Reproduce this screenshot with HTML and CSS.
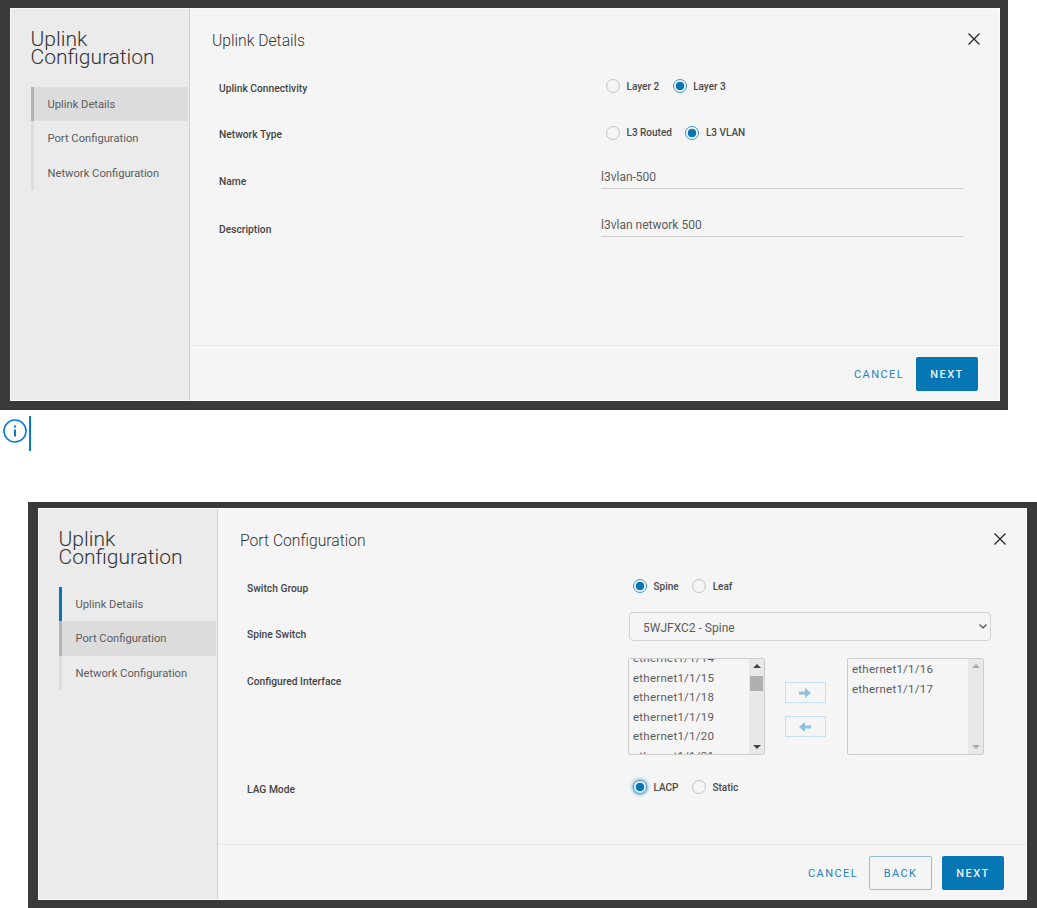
FILE: index.html
```html
<!DOCTYPE html>
<html lang="en">

<head>
    <meta charset="UTF-8" />
    <title>Uplink Configuration</title>
    <link rel="stylesheet" href="styles.css">
</head>

<body>
    <div class="shot shot-first">
        <div class="modal">
            <aside class="side">
                <h1 class="side-title">Uplink Configuration</h1>
                <nav class="steps">
                    <a class="step step-current">Uplink Details</a>
                    <a class="step">Port Configuration</a>
                    <a class="step">Network Configuration</a>
                </nav>
            </aside>
            <main class="main">
                <header class="main-head">
                    <h2 class="main-title">Uplink Details</h2>
                    <button class="close" aria-label="Close">
                        <svg viewBox="0 0 12 12" width="12" height="12"><path d="M.5.5l11 11M11.5.5l-11 11" /></svg>
                    </button>
                </header>
                <div class="form">
                    <div class="row">
                        <span class="row-label">Uplink Connectivity</span>
                        <div class="radios">
                            <label class="radio-item"><input type="radio" class="radio" name="conn"><span>Layer 2</span></label>
                            <label class="radio-item"><input type="radio" class="radio" name="conn" checked><span>Layer 3</span></label>
                        </div>
                    </div>
                    <div class="row">
                        <span class="row-label">Network Type</span>
                        <div class="radios">
                            <label class="radio-item"><input type="radio" class="radio" name="net"><span>L3 Routed</span></label>
                            <label class="radio-item"><input type="radio" class="radio" name="net" checked><span>L3 VLAN</span></label>
                        </div>
                    </div>
                    <div class="row">
                        <span class="row-label">Name</span>
                        <input class="text-input" type="text" value="l3vlan-500">
                    </div>
                    <div class="row row-desc">
                        <span class="row-label">Description</span>
                        <input class="text-input" type="text" value="l3vlan network 500">
                    </div>
                </div>
                <footer class="footer">
                    <button class="btn btn-link">CANCEL</button>
                    <button class="btn btn-primary">NEXT</button>
                </footer>
            </main>
        </div>
    </div>

    <div class="note">
        <svg class="note-icon" viewBox="0 0 24 24" width="24" height="24">
            <circle cx="12" cy="12" r="11" />
            <path d="M12 10.5v7M12 6.5v2" />
        </svg>
        <span class="note-bar"></span>
    </div>

    <div class="shot shot-second">
        <div class="modal">
            <aside class="side">
                <h1 class="side-title">Uplink Configuration</h1>
                <nav class="steps">
                    <a class="step step-done">Uplink Details</a>
                    <a class="step step-current">Port Configuration</a>
                    <a class="step">Network Configuration</a>
                </nav>
            </aside>
            <main class="main">
                <header class="main-head">
                    <h2 class="main-title">Port Configuration</h2>
                    <button class="close" aria-label="Close">
                        <svg viewBox="0 0 12 12" width="12" height="12"><path d="M.5.5l11 11M11.5.5l-11 11" /></svg>
                    </button>
                </header>
                <div class="form">
                    <div class="row">
                        <span class="row-label">Switch Group</span>
                        <div class="radios">
                            <label class="radio-item"><input type="radio" class="radio" name="group" checked><span>Spine</span></label>
                            <label class="radio-item"><input type="radio" class="radio" name="group"><span>Leaf</span></label>
                        </div>
                    </div>
                    <div class="row">
                        <span class="row-label">Spine Switch</span>
                        <div class="select-wrap">
                            <select class="select">
                                <option>5WJFXC2 - Spine</option>
                            </select>
                            <svg class="select-arrow" viewBox="0 0 8 5" width="8" height="5"><path d="M.5.5L4 4 7.5.5" /></svg>
                        </div>
                    </div>
                    <div class="row row-lists">
                        <span class="row-label">Configured Interface</span>
                        <div class="transfer">
                            <div class="listbox">
                                <ul class="list list-scrolled">
                                    <li>ethernet1/1/14</li>
                                    <li>ethernet1/1/15</li>
                                    <li>ethernet1/1/18</li>
                                    <li>ethernet1/1/19</li>
                                    <li>ethernet1/1/20</li>
                                    <li>ethernet1/1/21</li>
                                </ul>
                                <div class="scrollbar">
                                    <span class="arrow-up"></span>
                                    <span class="thumb"></span>
                                    <span class="arrow-down"></span>
                                </div>
                            </div>
                            <div class="move-btns">
                                <button class="move" aria-label="Add">
                                    <svg viewBox="0 0 12 10" width="12" height="10"><path d="M0 3.4h6V0l6 5-6 5V6.6H0z" /></svg>
                                </button>
                                <button class="move" aria-label="Remove">
                                    <svg viewBox="0 0 12 10" width="12" height="10"><path d="M12 3.4H6V0L0 5l6 5V6.6h6z" /></svg>
                                </button>
                            </div>
                            <div class="listbox">
                                <ul class="list">
                                    <li>ethernet1/1/16</li>
                                    <li>ethernet1/1/17</li>
                                </ul>
                                <div class="scrollbar scrollbar-off">
                                    <span class="arrow-up"></span>
                                    <span class="arrow-down"></span>
                                </div>
                            </div>
                        </div>
                    </div>
                    <div class="row row-last">
                        <span class="row-label">LAG Mode</span>
                        <div class="radios">
                            <label class="radio-item"><input type="radio" class="radio radio-focus" name="lag" checked><span>LACP</span></label>
                            <label class="radio-item"><input type="radio" class="radio" name="lag"><span>Static</span></label>
                        </div>
                    </div>
                </div>
                <footer class="footer">
                    <button class="btn btn-link">CANCEL</button>
                    <button class="btn btn-outline">BACK</button>
                    <button class="btn btn-primary">NEXT</button>
                </footer>
            </main>
        </div>
    </div>
</body>

</html>
```

FILE: styles.css
```css
:root {
    --frame: #3a3a3a;
    --side-bg: #ebebeb;
    --main-bg: #f5f5f5;
    --line: #cfcfcf;
    --text: #444444;
    --primary: #0776b4;
    --primary-soft: #8fc1de;
    --note-blue: #0b78d4;
}

* {
    margin: 0;
    padding: 0;
    box-sizing: border-box;
}

body {
    font-family: 'Roboto', sans-serif;
    background-color: white;
    color: var(--text);
    overflow: hidden;
}

.shot {
    background-color: var(--frame);
}

.shot-first {
    width: 1008px;
    height: 410px;
    padding: 8px 8px 9px 10px;
}

.shot-second {
    width: 1009px;
    height: 406px;
    margin-left: 28px;
    margin-top: 51px;
    padding: 6px 10px 8px 10px;
}

.modal {
    display: flex;
    height: 100%;
    background-color: var(--main-bg);
    outline: 1px solid rgba(255, 255, 255, 0.6);
    outline-offset: -1px;
}

.side {
    width: 180px;
    flex-shrink: 0;
    padding: 21.5px 1px 0 20.5px;
    background-color: var(--side-bg);
    border-right: 1px solid var(--line);
}

.side-title {
    font-size: 21px;
    font-weight: 300;
    line-height: 18px;
    color: #333333;
    margin-bottom: 21px;
}

.step {
    display: flex;
    align-items: center;
    height: 34.5px;
    padding-left: 14px;
    padding-top: 1px;
    font-size: 11.2px;
    color: #5c5c5c;
    border-left: 3px solid #dddddd;
}

.step-current {
    background-color: #dcdcdc;
    border-left-color: #b4b4b4;
}

.step-done {
    border-left-color: var(--primary);
}

.main {
    flex: 1;
    display: flex;
    flex-direction: column;
}

.main-head {
    height: 57px;
    flex-shrink: 0;
    display: flex;
    justify-content: space-between;
    align-items: flex-start;
    padding: 22.5px 20px 0 22px;
}

.shot-second .main-head {
    padding-right: 21px;
}

.main-title {
    font-size: 15.7px;
    font-weight: 300;
    line-height: 20px;
    color: #333333;
}

.close {
    display: block;
    margin-top: 2.5px;
    background: none;
    border: none;
}

.close svg {
    display: block;
    fill: none;
    stroke: #222222;
    stroke-width: 1.2;
}

.form {
    flex: 1;
    padding-left: 29px;
}

.row {
    display: flex;
    align-items: center;
    height: 46.5px;
}

.row-desc {
    margin-top: 1.5px;
}

.row-label {
    width: 382px;
    flex-shrink: 0;
    font-size: 10.25px;
    font-weight: 500;
    color: #444444;
}

.radios {
    display: flex;
    gap: 13.5px;
    margin-bottom: 4px;
    padding-left: 5px;
}

.shot-second .radios {
    padding-left: 4px;
}

.radio-item {
    display: flex;
    align-items: center;
    gap: 6.5px;
    font-size: 10px;
    font-weight: 500;
    color: #4a4a4a;
}

.radio {
    appearance: none;
    width: 14px;
    height: 14px;
    border: 1px solid #c4c4c4;
    border-radius: 50%;
    background-color: var(--main-bg);
}

.radio:checked {
    border-color: #3d95c8;
    background: radial-gradient(circle, var(--primary) 4px, var(--main-bg) 4.6px);
}

.radio-focus {
    box-shadow: 0 0 3px 1px #5fb2de;
}

.text-input {
    width: 363px;
    height: 24px;
    margin-bottom: 8px;
    border: none;
    border-bottom: 1px solid var(--line);
    background: none;
    font-family: inherit;
    font-size: 12px;
    color: #5c5c5c;
    outline: none;
}

.select-wrap {
    position: relative;
    width: 362px;
    height: 29px;
    margin-bottom: 16px;
}

.select {
    appearance: none;
    display: block;
    width: 100%;
    height: 100%;
    padding: 3px 0 0 13px;
    border: 1px solid #d4d4d4;
    border-radius: 4px;
    background-color: var(--main-bg);
    font-family: inherit;
    font-size: 12px;
    color: #5c5c5c;
}

.select-arrow {
    position: absolute;
    right: 4px;
    top: 12px;
    fill: none;
    stroke: #444444;
    stroke-width: 1.1;
}

.row-lists {
    height: 97px;
    align-items: flex-start;
}

.row-lists .row-label {
    padding-top: 16.5px;
}

.row-last {
    margin-top: 11px;
}

.transfer {
    display: flex;
    align-items: flex-start;
    margin-left: -1px;
    height: 97px;
}

.listbox {
    display: flex;
    width: 137px;
    height: 97px;
    border: 1px solid #cccccc;
    border-radius: 2px;
    overflow: hidden;
}

.list {
    flex: 1;
    list-style: none;
    padding: 1px 4px;
    font-size: 11.5px;
    line-height: 19.5px;
    letter-spacing: 0.25px;
    color: #5c5c5c;
}

.list-scrolled {
    margin-top: -11px;
}

.scrollbar {
    width: 15px;
    flex-shrink: 0;
    display: flex;
    flex-direction: column;
    align-items: center;
    padding: 5px 0;
    background-color: #e8e8e8;
}

.thumb {
    width: 13px;
    height: 15px;
    margin-top: 8px;
    background-color: #b0b0b0;
}

.arrow-up,
.arrow-down {
    width: 0;
    height: 0;
    border-left: 4px solid transparent;
    border-right: 4px solid transparent;
}

.arrow-up {
    border-bottom: 4px solid #444444;
}

.arrow-down {
    margin-top: auto;
    border-top: 4px solid #444444;
}

.scrollbar-off .arrow-up {
    border-bottom-color: #aaaaaa;
}

.scrollbar-off .arrow-down {
    border-top-color: #aaaaaa;
}

.move-btns {
    width: 82px;
    display: flex;
    flex-direction: column;
    align-items: center;
    gap: 13px;
    padding-top: 24px;
    padding-right: 2px;
}

.move {
    width: 41px;
    height: 21px;
    display: flex;
    align-items: center;
    justify-content: center;
    background: none;
    border: 1px solid #c4dfee;
}

.move svg {
    display: block;
    fill: var(--primary-soft);
}

.footer {
    height: 56px;
    flex-shrink: 0;
    display: flex;
    align-items: center;
    justify-content: flex-end;
    gap: 12px;
    padding-right: 22px;
    border-top: 1px solid #e8e8e8;
}

.shot-second .footer {
    padding-right: 23px;
}

.btn {
    height: 34px;
    padding-top: 1px;
    font-family: inherit;
    font-size: 11px;
    font-weight: 500;
    letter-spacing: 1.4px;
    border-radius: 2px;
    background: none;
    border: none;
}

.btn-link {
    width: 50px;
    font-weight: 400;
    color: #1f84bd;
}

.btn-outline {
    width: 63px;
    margin-right: -2px;
    margin-left: -1px;
    color: #1f84bd;
    font-weight: 400;
    border: 1px solid var(--primary-soft);
}

.btn-primary {
    width: 62px;
    background-color: var(--primary);
    color: #e8f3f9;
}

.note {
    display: flex;
    align-items: flex-start;
    height: 35px;
    margin-top: 6px;
    padding-left: 3px;
}

.note-icon {
    margin-top: 3px;
    fill: none;
    stroke: var(--note-blue);
    stroke-width: 1.6;
}

.note-icon path {
    stroke-width: 2;
}

.note-bar {
    width: 2px;
    height: 35px;
    margin-left: 2px;
    background-color: var(--note-blue);
}
```
